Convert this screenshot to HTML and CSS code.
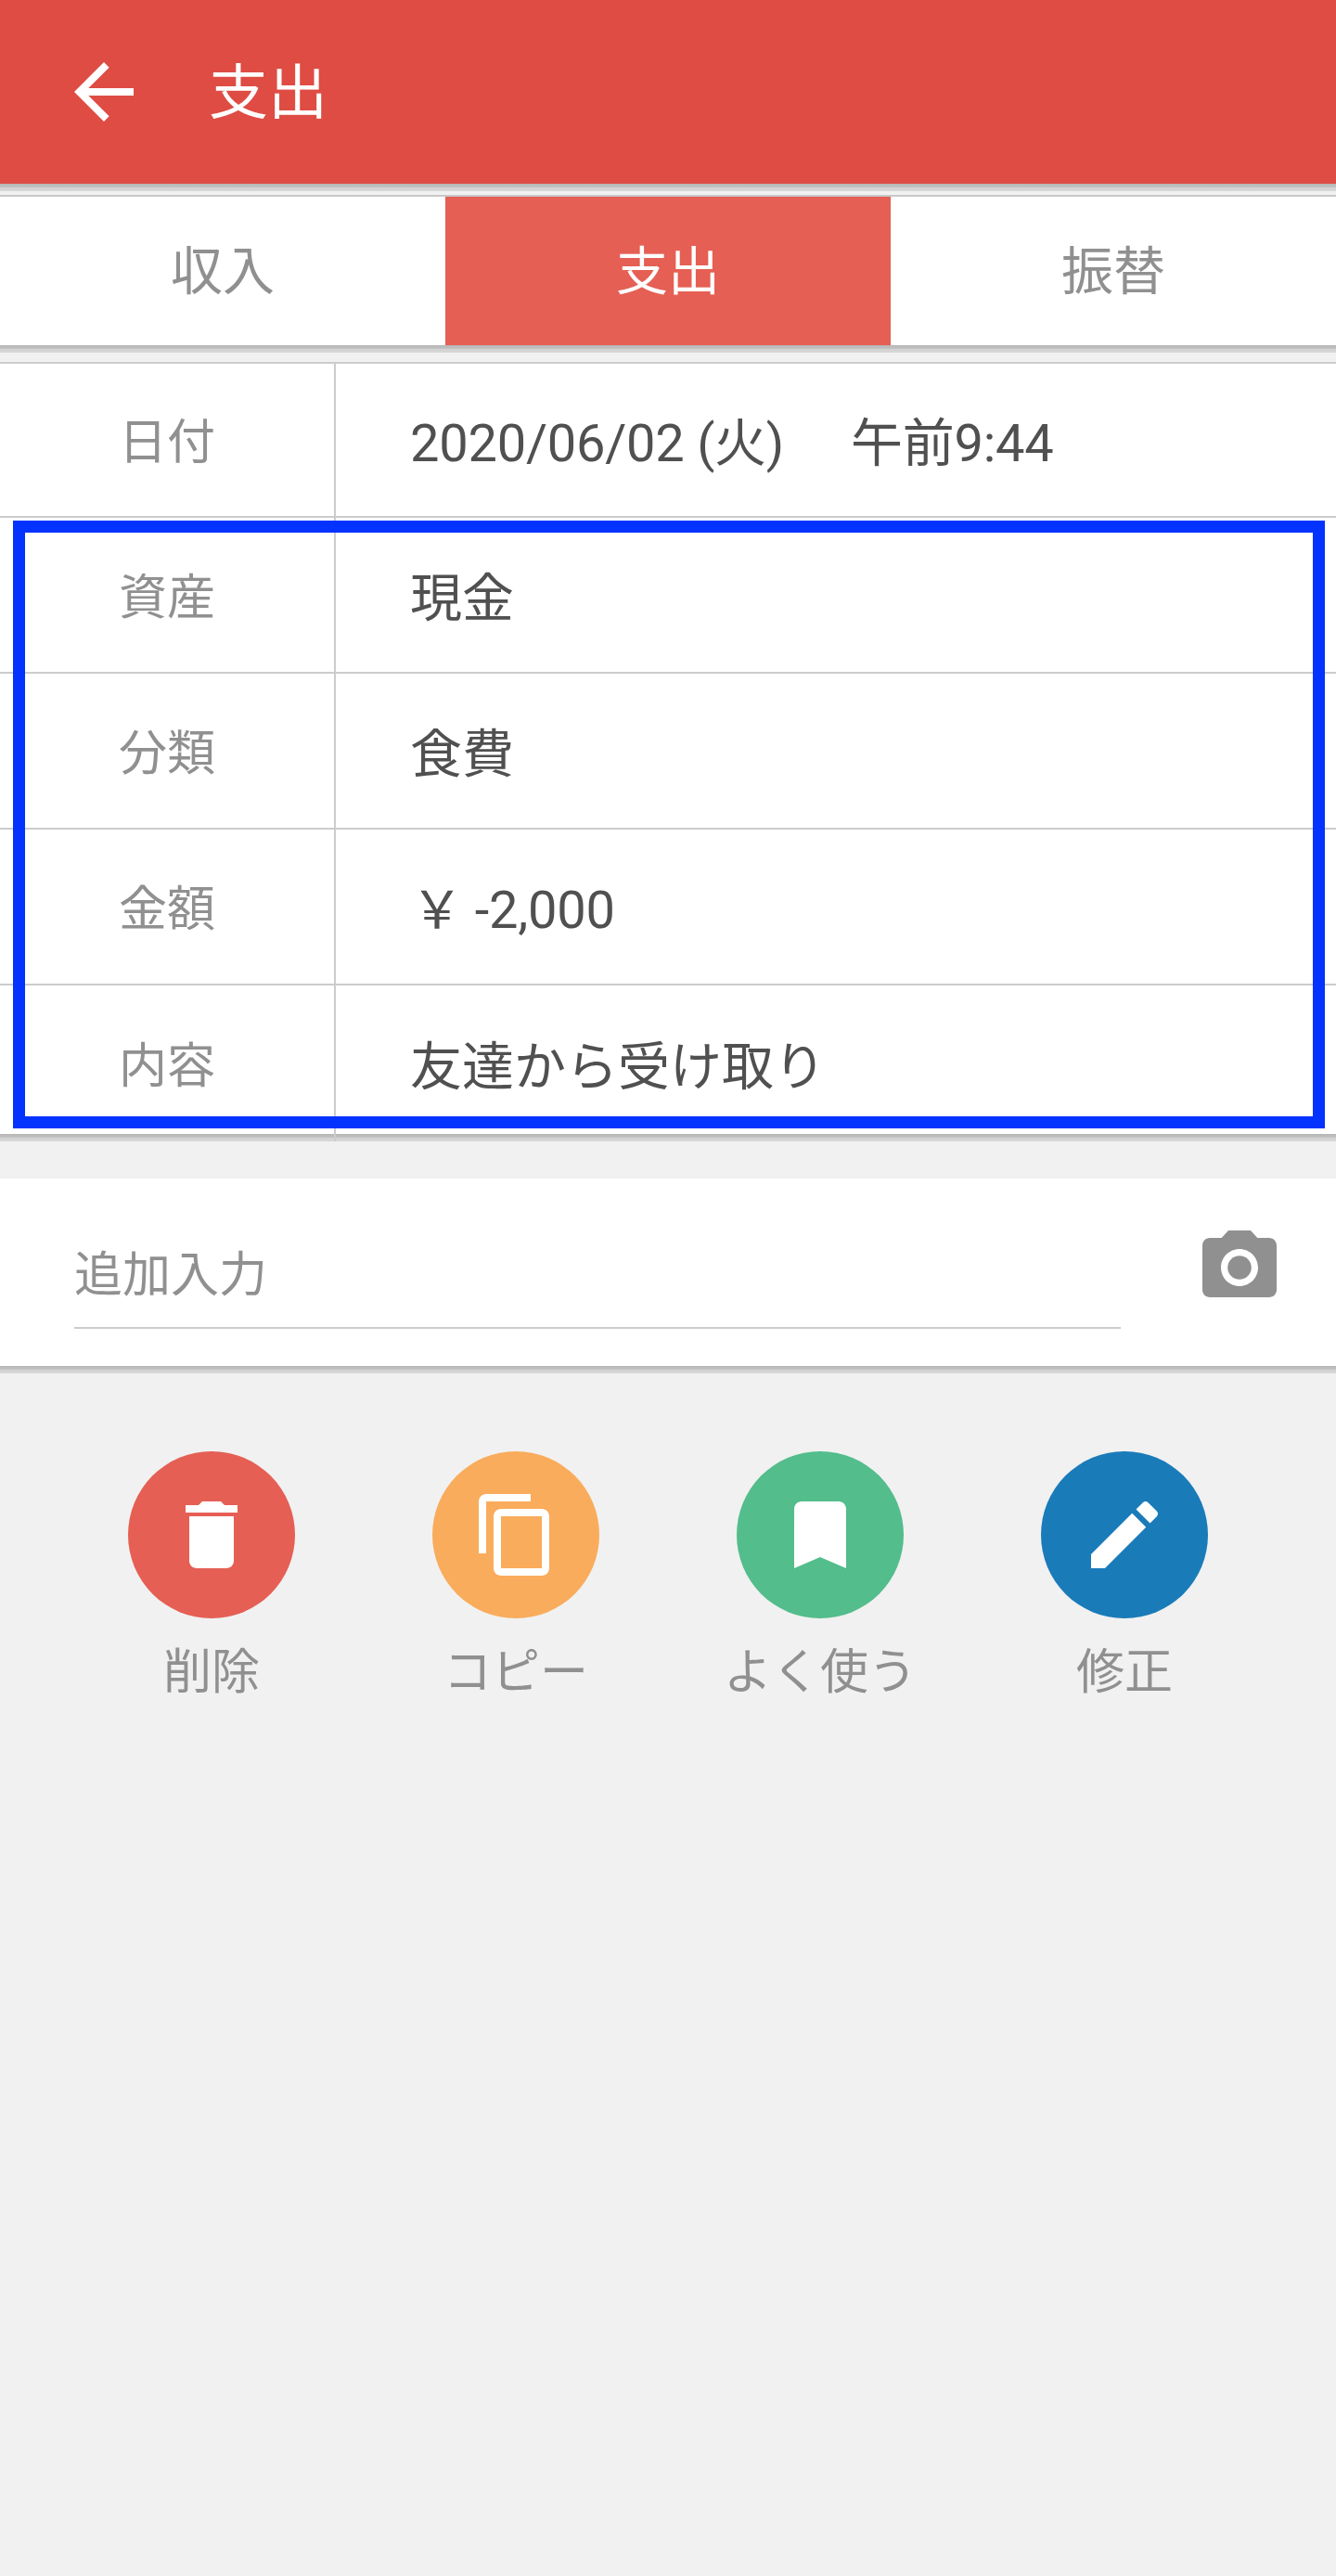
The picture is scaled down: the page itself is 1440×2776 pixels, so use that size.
FILE: index.html
```html
<!DOCTYPE html>
<html lang="ja">
<head>
    <meta charset="UTF-8">
    <meta name="viewport" content="width=device-width, initial-scale=1.0">
    <title>支出</title>
    <link rel="stylesheet" href="styles.css">
</head>
<body>
    <header class="app-bar edge">
        <svg class="icon back" viewBox="0 0 24 24"><path d="M20 11H7.83l5.59-5.59L12 4l-8 8 8 8 1.41-1.41L7.83 13H20v-2z"/></svg>
        <h1 class="app-title">支出</h1>
    </header>

    <nav class="tabs edge">
        <div class="tab">収入</div>
        <div class="tab active">支出</div>
        <div class="tab">振替</div>
    </nav>

    <section class="detail edge">
        <div class="row first">
            <div class="label">日付</div>
            <div class="value date"><span>2020/06/02 (火)</span><span>午前9:44</span></div>
        </div>
        <div class="row">
            <div class="label">資産</div>
            <div class="value">現金</div>
        </div>
        <div class="row">
            <div class="label">分類</div>
            <div class="value">食費</div>
        </div>
        <div class="row">
            <div class="label">金額</div>
            <div class="value amount"><span><span class="yen">￥</span>-2,000</span></div>
        </div>
        <div class="row last">
            <div class="label">内容</div>
            <div class="value">友達から受け取り</div>
        </div>
        <div class="highlight"></div>
    </section>

    <section class="extra edge">
        <div class="extra-input">追加入力</div>
        <svg class="icon camera" viewBox="0 0 24 24"><circle cx="12" cy="12" r="3.2"/><path d="M9 2L7.17 4H4c-1.1 0-2 .9-2 2v12c0 1.1.9 2 2 2h16c1.1 0 2-.9 2-2V6c0-1.1-.9-2-2-2h-3.17L15 2H9zm3 15c-2.76 0-5-2.24-5-5s2.24-5 5-5 5 2.24 5 5-2.24 5-5 5z"/></svg>
    </section>

    <section class="actions">
        <div class="action">
            <div class="circle red">
                <svg class="icon" viewBox="0 0 24 24"><path d="M6 19c0 1.1.9 2 2 2h8c1.1 0 2-.9 2-2V7H6v12zM19 4h-3.5l-1-1h-5l-1 1H5v2h14V4z"/></svg>
            </div>
            <div class="action-label">削除</div>
        </div>
        <div class="action">
            <div class="circle orange">
                <svg class="icon" viewBox="0 0 24 24"><path d="M16 1H4c-1.1 0-2 .9-2 2v14h2V3h12V1zm3 4H8c-1.1 0-2 .9-2 2v14c0 1.1.9 2 2 2h11c1.1 0 2-.9 2-2V7c0-1.1-.9-2-2-2zm0 16H8V7h11v14z"/></svg>
            </div>
            <div class="action-label">コピー</div>
        </div>
        <div class="action">
            <div class="circle green">
                <svg class="icon" viewBox="0 0 24 24"><path d="M17 3H7c-1.1 0-1.99.9-1.99 2L5 21l7-3 7 3V5c0-1.1-.9-2-2-2z"/></svg>
            </div>
            <div class="action-label">よく使う</div>
        </div>
        <div class="action">
            <div class="circle blue">
                <svg class="icon" viewBox="0 0 24 24"><path d="M3 17.25V21h3.75L17.81 9.94l-3.75-3.75L3 17.25zM20.71 7.04c.39-.39.39-1.02 0-1.41l-2.34-2.34c-.39-.39-1.02-.39-1.41 0l-1.83 1.83 3.75 3.75 1.83-1.83z"/></svg>
            </div>
            <div class="action-label">修正</div>
        </div>
    </section>
</body>
</html>
```

FILE: styles.css
```css
html, body {
    margin: 0;
    padding: 0;
}
body {
    width: 1440px;
    height: 2776px;
    overflow: hidden;
    background: #f1f1f1;
    font-family: Roboto, "Noto Sans CJK JP", sans-serif;
    line-height: 1;
    color: #909090;
}
.icon {
    display: block;
    width: 96px;
    height: 96px;
    fill: #fff;
}
/* the banded shadow under every panel */
.edge {
    position: relative;
}
.edge::after {
    content: "";
    position: absolute;
    left: 0;
    right: 0;
    top: 100%;
    height: 8px;
    background: linear-gradient(#b6b6b6, #c4c4c4 50%, #d2d2d2 50%, #d8d8d8);
}
.app-bar {
    display: flex;
    align-items: center;
    height: 198px;
    padding-left: 64px;
    background: #de4c43;
}
.app-title {
    margin: 3px 0 0 65px;
    font-size: 64px;
    font-weight: 400;
    color: #fff;
}
.tabs {
    display: grid;
    grid-template-columns: repeat(3, 480px);
    height: 160px;
    margin-top: 12px;
    background: #fff;
    border-top: 2px solid #c8c8c8;
}
.tab {
    display: flex;
    align-items: center;
    justify-content: center;
    padding-top: 2px;
    font-size: 56px;
}
.tab.active {
    background: #e55f54;
    color: #fff;
}
.detail {
    height: 830px;
    margin-top: 18px;
    background: #fff;
    border-top: 2px solid #cccccc;
}
.row {
    display: grid;
    grid-template-columns: 362px 1fr;
    height: 166px;
    border-bottom: 2px solid #cccccc;
}
.row.first {
    height: 164px;
}
/* last row runs 8px under the panel's shadow, only its divider shows there */
.row.last {
    height: 168px;
    border-bottom: none;
}
.label {
    display: flex;
    align-items: center;
    justify-content: center;
    padding-top: 7px;
    border-right: 2px solid #cccccc;
    font-size: 52px;
}
.row.last .label {
    position: relative;
    z-index: 1;
}
.value {
    display: flex;
    align-items: center;
    padding: 7px 0 0 80px;
    font-size: 56px;
    color: #505050;
}
.date {
    gap: 72px;
}
.date span, .amount span {
    letter-spacing: -0.25px;
}
.amount {
    padding-left: 81px;
}
.yen {
    margin-right: 13px;
}
.highlight {
    position: absolute;
    z-index: 2;
    left: 14px;
    top: 169px;
    width: 1414px;
    height: 655px;
    box-sizing: border-box;
    border: 13px solid #0433ff;
}
.extra {
    display: flex;
    height: 202px;
    margin-top: 48px;
    background: #fff;
}
.extra-input {
    width: 1128px;
    height: 162px;
    margin-left: 80px;
    box-sizing: border-box;
    padding-top: 79px;
    border-bottom: 2px solid #cccccc;
    font-size: 52px;
}
.camera {
    margin: 48px 0 0 80px;
    fill: #909090;
}
.actions {
    display: grid;
    grid-template-columns: repeat(4, 328px);
    padding: 92px 64px 0;
}
.action {
    display: flex;
    flex-direction: column;
    align-items: center;
}
.circle {
    display: flex;
    align-items: center;
    justify-content: center;
    width: 180px;
    height: 180px;
    border-radius: 50%;
}
.red { background: #e55f54; }
.orange { background: #f9ac5c; }
.green { background: #53bd8b; }
.blue { background: #1a7bb9; }
.action-label {
    margin-top: 33px;
    font-size: 52px;
}
```
